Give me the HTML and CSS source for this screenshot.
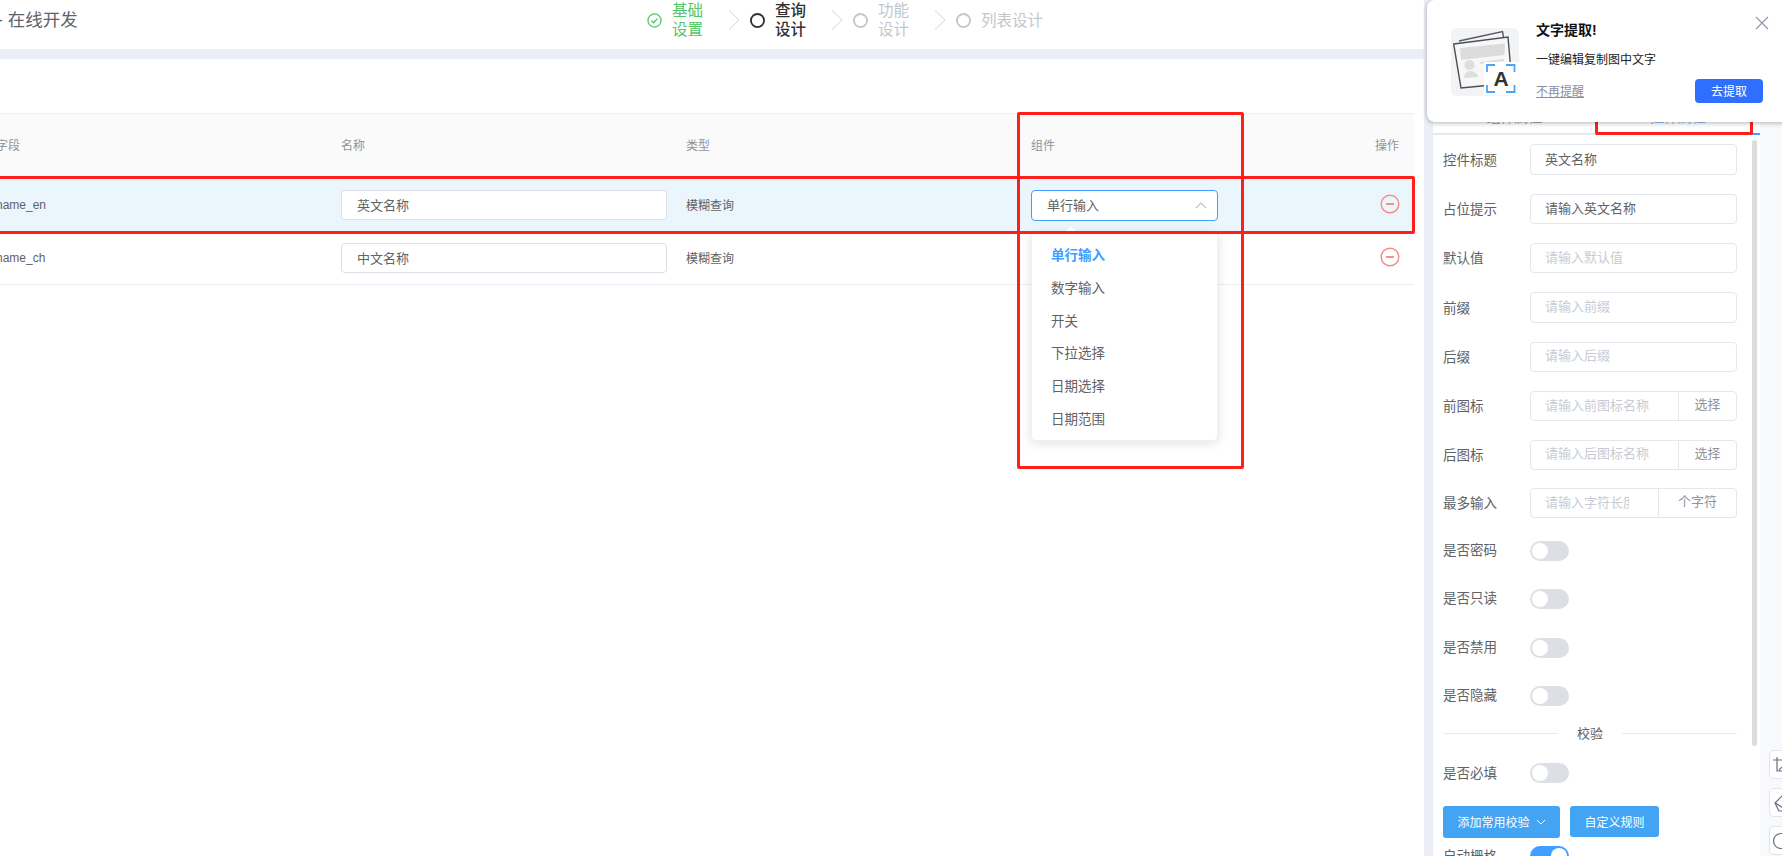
FILE: index.html
```html
<!DOCTYPE html>
<html lang="zh-CN">
<head>
<meta charset="utf-8">
<title>在线开发</title>
<link rel="stylesheet" href="styles.css">
</head>
<body>
<div class="app">
  <main class="main">
    <header class="topbar">
      <div class="title"><span class="crumb">-</span>在线开发</div>
      <ol class="steps">
        <li class="step step-done">
          <svg class="step-icon" viewBox="0 0 16 16"><circle cx="8" cy="8" r="7" fill="none" stroke="currentColor" stroke-width="1.4"/><path d="M4.8 8.2l2.2 2.2 4.2-4.4" fill="none" stroke="currentColor" stroke-width="1.4"/></svg>
          <span class="step-text">基础<br>设置</span>
          <svg class="step-sep" viewBox="0 0 12 20"><path d="M1 0.5l10 9.5-10 9.5" fill="none" stroke="#d4d4d4" stroke-width="1"/></svg>
        </li>
        <li class="step step-now">
          <svg class="step-icon" viewBox="0 0 16 16"><circle cx="8" cy="8" r="7" fill="none" stroke="currentColor" stroke-width="2"/></svg>
          <span class="step-text">查询<br>设计</span>
          <svg class="step-sep" viewBox="0 0 12 20"><path d="M1 0.5l10 9.5-10 9.5" fill="none" stroke="#d4d4d4" stroke-width="1"/></svg>
        </li>
        <li class="step step-todo">
          <svg class="step-icon" viewBox="0 0 16 16"><circle cx="8" cy="8" r="7" fill="none" stroke="currentColor" stroke-width="2"/></svg>
          <span class="step-text">功能<br>设计</span>
          <svg class="step-sep" viewBox="0 0 12 20"><path d="M1 0.5l10 9.5-10 9.5" fill="none" stroke="#d4d4d4" stroke-width="1"/></svg>
        </li>
        <li class="step step-todo">
          <svg class="step-icon" viewBox="0 0 16 16"><circle cx="8" cy="8" r="7" fill="none" stroke="currentColor" stroke-width="2"/></svg>
          <span class="step-text step-wide">列表设计</span>
        </li>
      </ol>
    </header>
    <section class="content">
      <div class="table">
        <div class="tr thead">
          <div class="td">字段</div>
          <div class="td">名称</div>
          <div class="td">类型</div>
          <div class="td">组件</div>
          <div class="td td-end">操作</div>
        </div>
        <div class="tr row row-active">
          <div class="td latin">name_en</div>
          <div class="td"><input class="cell-input" value="英文名称"></div>
          <div class="td td-text">模糊查询</div>
          <div class="td">
            <div class="select">
              <span class="select-text">单行输入</span>
              <svg class="select-arrow" viewBox="0 0 12 7"><path d="M1 6l5-5 5 5" fill="none" stroke="#c0c4cc" stroke-width="1.2"/></svg>
              <ul class="dropdown">
                <li class="option option-on">单行输入</li>
                <li class="option">数字输入</li>
                <li class="option">开关</li>
                <li class="option">下拉选择</li>
                <li class="option">日期选择</li>
                <li class="option">日期范围</li>
              </ul>
            </div>
          </div>
          <div class="td td-end td-icon">
            <svg class="minus" viewBox="0 0 20 20"><circle cx="10" cy="10" r="8.8" fill="none" stroke="#f78989" stroke-width="1.4"/><path d="M6 10h8" stroke="#f56c6c" stroke-width="1.5"/></svg>
          </div>
        </div>
        <div class="tr row">
          <div class="td latin">name_ch</div>
          <div class="td"><input class="cell-input" value="中文名称"></div>
          <div class="td td-text">模糊查询</div>
          <div class="td"></div>
          <div class="td td-end td-icon">
            <svg class="minus" viewBox="0 0 20 20"><circle cx="10" cy="10" r="8.8" fill="none" stroke="#f78989" stroke-width="1.4"/><path d="M6 10h8" stroke="#f56c6c" stroke-width="1.5"/></svg>
          </div>
        </div>
      </div>
    </section>
  </main>

  <aside class="panel">
    <div class="tabs">
      <div class="tab">组件属性</div>
      <div class="tab tab-on">控件属性</div>
    </div>
    <form class="form">
      <div class="field"><label class="label">控件标题</label><input class="input" value="英文名称"></div>
      <div class="field"><label class="label">占位提示</label><input class="input" value="请输入英文名称"></div>
      <div class="field"><label class="label">默认值</label><input class="input" placeholder="请输入默认值"></div>
      <div class="field"><label class="label">前缀</label><input class="input" placeholder="请输入前缀"></div>
      <div class="field"><label class="label">后缀</label><input class="input" placeholder="请输入后缀"></div>
      <div class="field"><label class="label">前图标</label>
        <div class="group"><input class="group-input" placeholder="请输入前图标名称"><span class="append">选择</span></div></div>
      <div class="field field-s"><label class="label">后图标</label>
        <div class="group"><input class="group-input" placeholder="请输入后图标名称"><span class="append">选择</span></div></div>
      <div class="field field-s"><label class="label">最多输入</label>
        <div class="group"><input class="group-input group-input-tight" placeholder="请输入字符长度"><span class="append append-wide">个字符</span></div></div>
      <div class="field field-s field-sw"><label class="label">是否密码</label><span class="switch"></span></div>
      <div class="field field-s field-sw"><label class="label">是否只读</label><span class="switch"></span></div>
      <div class="field field-s field-sw"><label class="label">是否禁用</label><span class="switch"></span></div>
      <div class="field field-s field-sw"><label class="label">是否隐藏</label><span class="switch"></span></div>
      <div class="divider"><span>校验</span></div>
      <div class="field field-s"><label class="label">是否必填</label><span class="switch"></span></div>
      <div class="actions">
        <button type="button" class="btn btn-add">添加常用校验<svg class="btn-chevron" viewBox="0 0 10 6"><path d="M1 1l4 4 4-4" fill="none" stroke="#fff" stroke-width="1"/></svg></button>
        <button type="button" class="btn btn-rule">自定义规则</button>
      </div>
      <div class="field field-last"><label class="label">自动栅格</label><span class="switch switch-on"></span></div>
    </form>
    <div class="scrollbar"></div>
  </aside>

  <div class="rail">
    <div class="tool"><svg viewBox="0 0 30 28"><path d="M7 6v14h14M3 9h14v14M9 19l8-8" fill="none" stroke="#6b7080" stroke-width="1.2"/></svg></div>
    <div class="tool"><svg viewBox="0 0 30 28"><path d="M5 14l10-10 8 8-9 10H9zM5.500 14l9 6" fill="none" stroke="#6b7080" stroke-width="1.2"/></svg></div>
    <div class="tool"><svg viewBox="0 0 30 28"><circle cx="11" cy="14" r="7.500" fill="none" stroke="#6b7080" stroke-width="1.2"/></svg></div>
  </div>

  <div class="mark mark-row"></div>
  <div class="mark mark-col"></div>
  <div class="mark mark-tab"></div>

  <div class="notice">
    <svg class="notice-art" viewBox="0 0 68 68">
      <rect width="68" height="68" rx="6" fill="#f2f3f5"/>
      <path d="M8 13L51.500 3.500 58 40" fill="none" stroke="#55585e" stroke-width="1.400"/>
      <path d="M2.700 16L57 9l4 46-51 5z" fill="#f7f7f8" stroke="#4b4e54" stroke-width="1.400"/>
      <path d="M9 20l45-4.500-.5 11.500L10 32z" fill="#dcdcdc"/>
      <path d="M29 35l24-3" stroke="#dcdcdc" stroke-width="2" fill="none"/>
      <circle cx="18.500" cy="37" r="5" fill="#dedede"/>
      <path d="M13 50c0-5 3-7 6-7s8 2 8 6z" fill="#dedede"/>
      <rect x="33" y="34" width="35" height="33" fill="#fff"/>
      <path d="M36 44v-7h8M55 37h8.500v7M63.500 57v7H55M44 64h-8v-7" fill="none" stroke="#4ba3f5" stroke-width="1.800"/>
      <text class="notice-a" x="50" y="58" text-anchor="middle">A</text>
    </svg>
    <div class="notice-body">
      <div class="notice-title">文字提取!</div>
      <div class="notice-sub">一键编辑复制图中文字</div>
      <div class="notice-foot">
        <a class="notice-link">不再提醒</a>
        <button type="button" class="notice-btn">去提取</button>
      </div>
    </div>
    <svg class="notice-close" viewBox="0 0 14 14"><path d="M1 1l12 12M13 1L1 13" stroke="#8d97a8" stroke-width="1.100"/></svg>
  </div>
</div>
</body>
</html>
```
FILE: styles.css
```css
* { box-sizing: border-box; }
html, body { margin: 0; padding: 0; height: 100%; overflow: hidden; }
body { font-family: "Liberation Sans", "Noto Sans CJK SC", sans-serif; color: #606266; font-size: 12px; }
ul, ol { list-style: none; margin: 0; padding: 0; }
input { font-family: inherit; outline: none; }
button { font-family: inherit; border: 0; cursor: pointer; }

.app { position: relative; display: flex; width: 1782px; height: 856px; overflow: hidden; background: #ebeef5; }

/* main column */
.main { width: 1424px; flex: none; display: flex; flex-direction: column; }
.topbar { height: 49px; background: #fff; display: flex; align-items: flex-start; }
.title { font-size: 17.500px; line-height: 40px; color: #5f6268; width: 647px; flex: none; }
.crumb { margin-left: -3px; margin-right: 5px; }

.steps { display: flex; font-size: 15.500px; line-height: 19px; }
.step { display: flex; align-items: center; height: 40px; }
.step-icon { width: 15px; height: 15px; margin-right: 10px; flex: none; }
.step-text { width: 33px; }
.step-wide { width: auto; white-space: nowrap; }
.step-sep { width: 12px; height: 20px; margin: 0 10px 0 23px; flex: none; }
.step-done { color: #4fc764; }
.step-now { color: #303133; font-weight: 500; }
.step-todo { color: #c4c6cc; }

.content { flex: 1; margin-top: 10px; background: #fff; padding-top: 54px; overflow: hidden; }
.table { margin-left: -20px; width: 1434px; }
.tr { display: grid; grid-template-columns: 345px 345px 345px 345px 54px; align-items: center; }
.td { padding-left: 16px; }
.td-end { padding-left: 0; padding-right: 15px; text-align: right; }
.thead { height: 64px; background: #fafafa; border-top: 1px solid #ebeef5; color: #909399; }
.thead .td, .td-text { padding-bottom: 2px; }
.td-icon { padding-right: 14px; padding-bottom: 2px; }
.row { height: 53px; border-bottom: 1px solid #ebeef5; }
.row-active { height: 55px; padding-top: 1px; background: #ebf5fc; border-bottom: 0; }
.latin { font-size: 12px; }
.cell-input { display: block; width: 326px; height: 30px; padding: 0 15px 2px; font-size: 13px; color: #606266; background: #fff; border: 1px solid #dcdfe6; border-radius: 4px; }

.select { position: relative; display: flex; align-items: center; justify-content: space-between; width: 187px; height: 31px; padding: 0 10px 0 15px; margin-top: 1px; font-size: 13px; background: #fff; border: 1px solid #409eff; border-radius: 4px; }
.select-text { padding-bottom: 3px; }
.select-arrow { width: 12px; height: 7px; }
.dropdown { position: absolute; top: 41px; left: -1px; width: 187px; height: 209px; padding: 7px 0; background: #fff; border-radius: 4px; box-shadow: 0 2px 12px rgba(0, 0, 0, .12); border: 1px solid #eef0f4; z-index: 2; }
.dropdown::before { content: ""; position: absolute; top: -5px; left: 35px; width: 8px; height: 8px; background: #fff; transform: rotate(45deg); }
.option { height: 32.800px; line-height: 32.800px; padding-left: 19px; font-size: 13.500px; color: #606266; }
.option-on { color: #409eff; font-weight: 700; }
.minus { display: inline-block; width: 20px; height: 20px; vertical-align: middle; }

/* right panel */
.panel { position: relative; width: 327px; flex: none; margin-left: 9px; background: #fff; overflow: hidden; }
.tabs { display: grid; grid-template-columns: 163px 164px; height: 135px; align-items: end; border-bottom: 2px solid #e4e7ed; }
.tab { height: 25px; margin-bottom: -2px; text-align: center; font-size: 14px; color: #a3a6ad; line-height: 14px; border-bottom: 2px solid transparent; }
.tab-on { color: #8fc4f5; border-bottom-color: #409eff; }
.form { padding-left: 10px; }
.field { display: flex; align-items: center; height: 49.300px; }
.field-s { height: 48.200px; }
.field-last { height: 36px; }
.label { width: 87px; flex: none; padding-bottom: 2px; font-size: 13.500px; color: #606266; }
.field-sw .label { padding-bottom: 4px; }
.input { width: 207px; height: 30.500px; padding: 0 14px 2px; font-size: 13px; color: #606266; border: 1px solid #e4e7ed; border-radius: 4px; }
.input::placeholder, .group-input::placeholder { color: #c8cbd2; opacity: 1; }
.group { display: flex; width: 207px; height: 30.500px; border: 1px solid #e4e7ed; border-radius: 4px; }
.group-input { flex: 1; min-width: 0; width: 0; padding: 0 14px 2px; font-size: 13px; border: 0; background: transparent; }
.group-input-tight { padding-right: 29px; }
.append { flex: none; width: 58px; text-align: center; font-size: 13px; line-height: 26px; color: #909399; border-left: 1px solid #e4e7ed; }
.append-wide { width: 78px; }
.switch { position: relative; display: block; width: 39px; height: 20px; border-radius: 10px; background: #dcdfe6; }
.switch::after { content: ""; position: absolute; top: 2px; left: 2px; width: 16px; height: 16px; border-radius: 50%; background: #fff; }
.switch-on { background: #409eff; }
.switch-on::after { left: 21px; }
.divider { display: flex; align-items: center; height: 29px; padding-bottom: 2px; width: 294px; font-size: 13px; color: #606266; }
.divider::before, .divider::after { content: ""; flex: 1; height: 1px; background: #e8eaf0; }
.divider span { padding: 0 19px 2px; }
.actions { display: flex; gap: 10px; margin-top: 9px; align-items: flex-start; }
.btn { display: flex; align-items: center; justify-content: center; height: 31px; padding: 0 0 1px; font-size: 12px; color: #fff; background: #42a4f2; border-radius: 3px; }
.btn-add { width: 117px; height: 32px; }
.btn-rule { width: 89px; }
.btn-chevron { width: 10px; height: 6px; margin-left: 6px; }
.scrollbar { position: absolute; left: 319px; top: 140px; width: 5px; height: 606px; border-radius: 3px; background: #dcdde0; }

/* right rail */
.rail { flex: 1; display: flex; flex-direction: column; gap: 9px; padding: 750px 0 0 9px; background: #f8f9fc; overflow: hidden; }
.tool { flex: none; width: 30px; height: 29px; background: #fff; border: 1px solid #e2e4ea; border-radius: 5px; }
.tool svg { display: block; width: 30px; height: 28px; }

/* annotations */
.mark { position: absolute; border: 3px solid #ff1f1a; border-radius: 2px; pointer-events: none; z-index: 3; }
.mark-row { left: -8px; top: 176px; width: 1423px; height: 58px; }
.mark-col { left: 1017px; top: 112px; width: 227px; height: 357px; }
.mark-tab { left: 1595px; top: 60px; width: 158px; height: 75px; }

/* floating notice */
.notice { position: absolute; z-index: 5; left: 1427px; top: 0; width: 362px; height: 122px; display: flex; padding: 28px 0 0 24px; background: #fff; border-radius: 8px; box-shadow: 0 1px 5px rgba(0, 0, 0, .3); color: #222; }
.notice-art { width: 68px; height: 68px; flex: none; }
.notice-a { font: 700 21px "Liberation Sans", sans-serif; fill: #333; }
.notice-body { width: 227px; margin-left: 17px; margin-top: -8px; }
.notice-title { font-size: 14px; font-weight: 700; line-height: 20px; color: #111; }
.notice-sub { font-size: 12px; line-height: 18px; margin-top: 11px; }
.notice-foot { display: flex; justify-content: space-between; align-items: center; margin-top: 10px; }
.notice-link { font-size: 12px; color: #8a909c; text-decoration: underline; padding-bottom: 2px; }
.notice-btn { width: 68px; height: 24px; padding: 0 0 1px; font-size: 12px; color: #fff; background: #2f6fff; border-radius: 4px; }
.notice-close { position: absolute; left: 328px; top: 16px; width: 14px; height: 14px; }
```
